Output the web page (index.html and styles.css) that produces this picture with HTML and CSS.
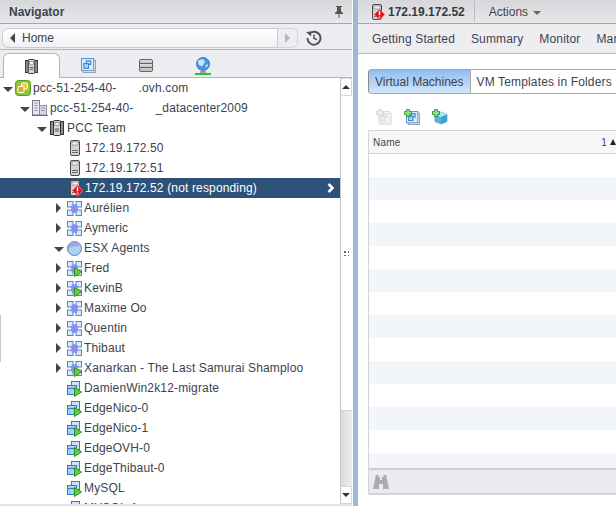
FILE: index.html
```html
<!DOCTYPE html>
<html lang="en">
<head>
    <meta charset="UTF-8">
    <title>Navigator</title>
    <link rel="stylesheet" href="styles.css">
</head>
<body>
<svg class="sprite">
    <symbol id="host" viewBox="0 0 10 16">
        <rect x="0.5" y="0.5" width="9" height="15" rx="1.5" fill="#d4d4d4" stroke="#4a4a4a"/>
        <rect x="2" y="2" width="6" height="3" fill="#f4f4f4" stroke="#777" stroke-width=".6"/>
        <path d="M2 10.500h6M2 12.500h6" stroke="#666"/>
    </symbol>
    <symbol id="alert" viewBox="0 0 10 10">
        <path d="M5 0 10 5 5 10 0 5Z" fill="#e0121c" stroke="#fff" stroke-width=".4"/>
        <path d="M5 2v3.600M5 6.800v1.200" stroke="#fff" stroke-width="1.300"/>
    </symbol>
    <symbol id="cluster" viewBox="0 0 14 16">
        <rect x="0.5" y="1.5" width="3.5" height="13" fill="#8f8f8f" stroke="#333"/>
        <rect x="10" y="1.5" width="3.5" height="13" fill="#8f8f8f" stroke="#333"/>
        <rect x="3.5" y="0.5" width="7" height="15" rx="1" fill="#d8d8d8" stroke="#333"/>
        <rect x="5" y="2.5" width="4" height="3" fill="#fff" stroke="#666" stroke-width=".6"/>
        <path d="M5 9h4M5 11h4" stroke="#555"/>
    </symbol>
    <symbol id="vcenter" viewBox="0 0 16 16">
        <rect x="0.5" y="0.5" width="15" height="15" rx="3" fill="#8cc43c" stroke="#5c9a1e"/>
        <rect x="6.5" y="3" width="6" height="6" rx="1" fill="#f5c842" stroke="#fff"/>
        <rect x="3" y="6.5" width="6" height="6" rx="1" fill="#eda51f" stroke="#fff"/>
    </symbol>
    <symbol id="datacenter" viewBox="0 0 16 16">
        <rect x="0.5" y="0.5" width="7" height="14.5" fill="#e6e6ee" stroke="#77778c"/>
        <rect x="7.5" y="5.5" width="7" height="9.5" fill="#d8d8e4" stroke="#8d8da0"/>
        <path d="M2.500 3h3M2.500 5.500h3M2.500 8h3M2.500 10.500h3M9.500 8h3M9.500 10.500h3" stroke="#8a8aa0"/>
        <path d="M0 15.500h16" stroke="#6a6a80"/>
    </symbol>
    <symbol id="pool" viewBox="0 0 15 15">
        <rect x="0.500" y="0.500" width="5.500" height="5.500" fill="#d8eafb" stroke="#3f8ed8"/>
        <rect x="9" y="0.500" width="5.500" height="5.500" fill="#d8eafb" stroke="#3f8ed8"/>
        <rect x="0.500" y="9" width="5.500" height="5.500" fill="#d8eafb" stroke="#3f8ed8"/>
        <rect x="9" y="9" width="5.500" height="5.500" fill="#d8eafb" stroke="#3f8ed8"/>
        <path d="M6 7.500a1.500 1.500 0 0 1 1.500-3 1.500 1.500 0 0 1 1.500 3 1.500 1.500 0 0 1-1.500 3 1.500 1.500 0 0 1-1.500-3Z" fill="#8e8cf0" stroke="#8e8cf0" stroke-width="2"/>
    </symbol>
    <symbol id="play" viewBox="0 0 8 10">
        <path d="M0.500 0.500 7.500 5 0.500 9.500Z" fill="#5fd33a" stroke="#2d8f1a"/>
    </symbol>
    <symbol id="vm" viewBox="0 0 15 15">
        <rect x="4.500" y="0.500" width="8" height="8" fill="#cfe4f8" stroke="#2f7fc4"/>
        <rect x="0.500" y="4.500" width="9" height="9" fill="#a8cff2" stroke="#2f7fc4"/>
        <path d="M0.500 7.500h9" stroke="#2f7fc4"/>
    </symbol>
    <symbol id="folder" viewBox="0 0 16 16">
        <rect x="2.500" y="2.500" width="13" height="13" fill="#e6e6ea" stroke="#9a9aa6"/>
        <rect x="0.500" y="0.500" width="13" height="13" fill="#dcebf9" stroke="#4c90ce"/>
        <rect x="5.500" y="3" width="5" height="4" fill="#a9d0f2" stroke="#2f7fc4"/>
        <rect x="3" y="6" width="5" height="5" fill="#a9d0f2" stroke="#2f7fc4"/>
    </symbol>
    <symbol id="storage" viewBox="0 0 14 13">
        <rect x="0.500" y="0.500" width="13" height="12" rx="1.500" fill="#c4c4c4" stroke="#666"/>
        <path d="M1 4.500h12M1 8.500h12" stroke="#666"/>
        <path d="M1.500 2h11M1.500 6h11" stroke="#ececec"/>
    </symbol>
    <symbol id="globe" viewBox="0 0 16 18">
        <circle cx="8" cy="7" r="6.500" fill="#4a94e6" stroke="#3a7cc8"/>
        <path d="M3 3.500 8 2 10 5 7 9.500 3.500 7.500ZM10 8.500l3-1.500-1 3.500Z" fill="#cfe7fb"/>
        <path d="M8 13.500v1.500M5 15h6" stroke="#888" stroke-width="1.500"/>
        <path d="M0 17h16" stroke="#2fbf2f" stroke-width="2"/>
    </symbol>
    <symbol id="esx" viewBox="0 0 15 15">
        <circle cx="7.500" cy="7.500" r="7" fill="#a9d4f2" stroke="#6a78b8"/>
        <path d="M1 8.500C4 4 9 7 14 4 12.500 1.500 10 .5 7.500 .5 3.500 .5 .5 4 1 8.500Z" fill="#a7a3e6"/>
    </symbol>
    <symbol id="history" viewBox="0 0 16 16">
        <path d="M3 4A6.500 6.500 0 1 1 1.500 8" fill="none" stroke="#555" stroke-width="2"/>
        <path d="M0 2 5.500 1.500 5 6.500Z" fill="#555"/>
        <path d="M8 4.500V8.500L11 9.500" fill="none" stroke="#555" stroke-width="1.500"/>
    </symbol>
    <symbol id="box" viewBox="0 0 14 14">
        <path d="M7 1 13 3.500V10.500L7 13 1 10.500V3.500Z" fill="#5bb2e0" stroke="#3d8fc0" stroke-width=".6"/>
        <path d="M1 3.500 7 6 13 3.500 7 1Z" fill="#b6e2f6"/>
        <path d="M7 6V13L13 10.500V3.500Z" fill="#3f9ed2"/>
    </symbol>
    <symbol id="plus" viewBox="0 0 8 8">
        <path d="M2.500 .5h3v2h2v3h-2v2h-3v-2h-2v-3h2Z" fill="#8be08a" stroke="#1f8a2a" stroke-width=".8"/>
    </symbol>
</svg>

<div class="layout">
    <div class="navigator">
        <div class="panel-title">
            <span>Navigator</span>
            <svg class="pin" viewBox="0 0 10 12"><path d="M2 0h6v1H7v4l2 2v1H5.500v4h-1V8H1V7l2-2V1H2Z" fill="#555"/></svg>
        </div>
        <div class="home-bar">
            <div class="home-btn"><span class="tri-left"></span>Home</div>
            <div class="forward-btn"><span class="tri-right"></span></div>
            <svg class="history"><use href="#history"/></svg>
        </div>
        <div class="nav-tabs">
            <div class="nav-tab active"><svg class="tab-hosts"><use href="#cluster"/></svg></div>
            <div class="nav-tab"><svg class="tab-vms"><use href="#folder"/></svg></div>
            <div class="nav-tab"><svg class="tab-storage"><use href="#storage"/></svg></div>
            <div class="nav-tab"><svg class="tab-net"><use href="#globe"/></svg></div>
        </div>
        <div class="tree-wrap">
            <div class="tree">
                <div class="row lv0"><span class="arrow open"></span><span class="ico"><svg class="i16"><use href="#vcenter"/></svg></span><span>pcc-51-254-40-</span><span class="blank-a">.ovh.com</span></div>
                <div class="row lv1"><span class="arrow open"></span><span class="ico"><svg class="i16"><use href="#datacenter"/></svg></span><span>pcc-51-254-40-</span><span class="blank-b">_datacenter2009</span></div>
                <div class="row lv2"><span class="arrow open"></span><span class="ico"><svg class="i16"><use href="#cluster"/></svg></span><span>PCC Team</span></div>
                <div class="row lv3 hostrow"><span class="arrow"></span><span class="ico"><svg class="ihost"><use href="#host"/></svg></span><span>172.19.172.50</span></div>
                <div class="row lv3 hostrow"><span class="arrow"></span><span class="ico"><svg class="ihost"><use href="#host"/></svg></span><span>172.19.172.51</span></div>
                <div class="row lv3 hostrow selected"><span class="arrow"></span><span class="ico"><svg class="ihost"><use href="#host"/></svg><svg class="badge-alert"><use href="#alert"/></svg></span><span>172.19.172.52 (not responding)</span><svg class="chevron" viewBox="0 0 8 10"><path d="M1.500 1 5.500 5 1.500 9" fill="none" stroke="#fff" stroke-width="2.600"/></svg></div>
                <div class="row lv3"><span class="arrow closed"></span><span class="ico"><svg class="i15"><use href="#pool"/></svg></span><span>Aurélien</span></div>
                <div class="row lv3"><span class="arrow closed"></span><span class="ico"><svg class="i15"><use href="#pool"/></svg></span><span>Aymeric</span></div>
                <div class="row lv3"><span class="arrow open"></span><span class="ico"><svg class="i15"><use href="#esx"/></svg></span><span>ESX Agents</span></div>
                <div class="row lv3"><span class="arrow closed"></span><span class="ico"><svg class="i15"><use href="#pool"/></svg><svg class="badge-play"><use href="#play"/></svg></span><span>Fred</span></div>
                <div class="row lv3"><span class="arrow closed"></span><span class="ico"><svg class="i15"><use href="#pool"/></svg><svg class="badge-play"><use href="#play"/></svg></span><span>KevinB</span></div>
                <div class="row lv3"><span class="arrow closed"></span><span class="ico"><svg class="i15"><use href="#pool"/></svg></span><span>Maxime Oo</span></div>
                <div class="row lv3"><span class="arrow closed"></span><span class="ico"><svg class="i15"><use href="#pool"/></svg></span><span>Quentin</span></div>
                <div class="row lv3"><span class="arrow closed"></span><span class="ico"><svg class="i15"><use href="#pool"/></svg></span><span>Thibaut</span></div>
                <div class="row lv3"><span class="arrow closed"></span><span class="ico"><svg class="i15"><use href="#pool"/></svg><svg class="badge-play"><use href="#play"/></svg></span><span>Xanarkan - The Last Samurai Shamploo</span></div>
                <div class="row lv3"><span class="arrow"></span><span class="ico"><svg class="i15"><use href="#vm"/></svg><svg class="badge-play"><use href="#play"/></svg></span><span>DamienWin2k12-migrate</span></div>
                <div class="row lv3"><span class="arrow"></span><span class="ico"><svg class="i15"><use href="#vm"/></svg><svg class="badge-play"><use href="#play"/></svg></span><span>EdgeNico-0</span></div>
                <div class="row lv3"><span class="arrow"></span><span class="ico"><svg class="i15"><use href="#vm"/></svg><svg class="badge-play"><use href="#play"/></svg></span><span>EdgeNico-1</span></div>
                <div class="row lv3"><span class="arrow"></span><span class="ico"><svg class="i15"><use href="#vm"/></svg><svg class="badge-play"><use href="#play"/></svg></span><span>EdgeOVH-0</span></div>
                <div class="row lv3"><span class="arrow"></span><span class="ico"><svg class="i15"><use href="#vm"/></svg><svg class="badge-play"><use href="#play"/></svg></span><span>EdgeThibaut-0</span></div>
                <div class="row lv3"><span class="arrow"></span><span class="ico"><svg class="i15"><use href="#vm"/></svg><svg class="badge-play"><use href="#play"/></svg></span><span>MySQL</span></div>
                <div class="row lv3"><span class="arrow"></span><span class="ico"><svg class="i15"><use href="#vm"/></svg></span><span>MYSQL-1</span></div>
            </div>
            <div class="scrollbar">
                <div class="sb-btn"><span class="sb-up"></span></div>
                <div class="sb-thumb"><span class="grip"></span></div>
                <div class="sb-track"></div>
                <div class="sb-btn"><span class="sb-down"></span></div>
            </div>
        </div>
    </div>

    <div class="splitter"></div>

    <div class="content">
        <div class="panel-title content-title">
            <span class="title-ico"><svg class="ihost"><use href="#host"/></svg><svg class="badge-alert"><use href="#alert"/></svg></span>
            <b>172.19.172.52</b>
            <span class="title-sep"></span>
            <span class="actions">Actions</span><span class="caret"></span>
        </div>
        <div class="content-tabs">
            <span>Getting Started</span>
            <span>Summary</span>
            <span>Monitor</span>
            <span>Manage</span>
        </div>
        <div class="content-body">
            <div class="segments">
                <div class="segment on">Virtual Machines</div>
                <div class="segment wide">VM Templates in Folders</div>
            </div>
            <div class="toolbar">
                <span class="tool faded"><svg class="i14"><use href="#folder"/></svg><svg class="badge-plus"><use href="#plus"/></svg></span>
                <span class="tool"><svg class="i14"><use href="#folder"/></svg><svg class="badge-plus"><use href="#plus"/></svg></span>
                <span class="tool"><svg class="i14"><use href="#box"/></svg><svg class="badge-plus"><use href="#plus"/></svg></span>
            </div>
            <div class="grid">
                <div class="grid-head"><span>Name</span><span class="sort">1<span class="sort-tri"></span></span></div>
                <div class="grid-rows">
                    <div class="grid-row"></div><div class="grid-row"></div><div class="grid-row"></div>
                    <div class="grid-row"></div><div class="grid-row"></div><div class="grid-row"></div>
                    <div class="grid-row"></div><div class="grid-row"></div><div class="grid-row"></div>
                    <div class="grid-row"></div><div class="grid-row"></div><div class="grid-row"></div>
                    <div class="grid-row"></div><div class="grid-row"></div>
                </div>
                <div class="grid-foot">
                    <svg class="binoculars" viewBox="0 0 16 14"><path d="M2.500 0h3v2H7v3h2V2h1.500V0h3v2L16 14h-6V9H6v5H0L2.500 2Z" fill="#a9adb2"/></svg>
                </div>
            </div>
        </div>
    </div>
</div>
<div class="edge-mark"></div>
</body>
</html>
```

FILE: styles.css
```css
html, body {
    margin: 0;
    padding: 0;
    height: 506px;
    overflow: hidden;
}

body {
    font-family: "Liberation Sans", Arial, sans-serif;
    font-size: 12px;
    color: #3c4350;
    background-color: #ffffff;
}

svg {
    display: block;
}

.sprite {
    display: none;
}

.layout {
    display: flex;
    height: 506px;
}

.navigator {
    width: 352px;
    height: 504px;
    flex: none;
    display: flex;
    flex-direction: column;
    border-bottom: 2px solid #e4e4e4;
    background-color: #ebedf0;
}

.panel-title {
    height: 23px;
    flex: none;
    display: flex;
    align-items: center;
    justify-content: space-between;
    padding: 0 8px 0 9px;
    font-weight: bold;
    background: linear-gradient(#d6d7da, #e8e8ea);
    border-bottom: 1px solid #a6a6a6;
}

.pin {
    width: 10px;
    height: 12px;
}

/* home bar */
.home-bar {
    height: 26px;
    flex: none;
    display: flex;
    align-items: center;
    padding-top: 2px;
    box-sizing: border-box;
    border-bottom: 1px solid #b4b4b4;
}

.home-btn {
    width: 276px;
    height: 20px;
    margin-left: 2px;
    display: flex;
    align-items: center;
    box-sizing: border-box;
    font-size: 12px;
    border: 1px solid #c9ccd2;
    border-radius: 6px 0 0 6px;
    background: linear-gradient(#ffffff, #eff1f4);
}

.tri-left {
    width: 0;
    height: 0;
    margin: 0 7px 0 7px;
    border-top: 5px solid transparent;
    border-bottom: 5px solid transparent;
    border-right: 5px solid #444;
}

.forward-btn {
    width: 20px;
    height: 20px;
    display: flex;
    align-items: center;
    justify-content: center;
    box-sizing: border-box;
    border: 1px solid #d2d4d8;
    border-left: none;
    border-radius: 0 6px 6px 0;
}

.tri-right {
    width: 0;
    height: 0;
    border-top: 5px solid transparent;
    border-bottom: 5px solid transparent;
    border-left: 5px solid #b4b6ba;
}

.history {
    width: 16px;
    height: 16px;
    margin-left: 8px;
}

/* tabs */
.nav-tabs {
    height: 28px;
    flex: none;
    display: flex;
    padding-left: 3px;
    box-sizing: border-box;
    padding-top: 3px;
    border-bottom: 1px solid #b4b4b4;
}

.nav-tab {
    width: 57px;
    height: 25px;
    display: flex;
    align-items: center;
    justify-content: center;
    box-sizing: border-box;
}

.nav-tab.active {
    background-color: #ffffff;
    border: 1px solid #b4b4b4;
    border-bottom: none;
    border-radius: 6px 6px 0 0;
}

.tab-hosts {
    width: 13px;
    height: 15px;
}

.tab-vms {
    width: 15px;
    height: 15px;
}

.tab-storage {
    width: 14px;
    height: 13px;
}

.tab-net {
    width: 16px;
    height: 18px;
}

/* tree */
.tree-wrap {
    flex: 1;
    display: flex;
    min-height: 0;
    background-color: #ffffff;
}

.tree {
    width: 340px;
    flex: none;
    overflow: hidden;
    letter-spacing: 0.15px;
}

.row {
    height: 20px;
    display: flex;
    align-items: center;
    white-space: nowrap;
}

.lv0 { padding-left: 2px; }
.lv1 { padding-left: 19px; }
.lv2 { padding-left: 36px; }
.lv3 { padding-left: 53px; }

.arrow {
    width: 12px;
    height: 12px;
    flex: none;
    display: flex;
    align-items: center;
    justify-content: center;
}

.arrow.open::before {
    content: "";
    border-left: 5px solid transparent;
    border-right: 5px solid transparent;
    border-top: 5px solid #444;
    margin-top: 2px;
}

.arrow.closed::before {
    content: "";
    border-top: 5px solid transparent;
    border-bottom: 5px solid transparent;
    border-left: 5px solid #444;
    margin-left: -1px;
}

.ico {
    width: 17px;
    height: 18px;
    flex: none;
    margin-right: 2px;
    position: relative;
    display: flex;
    align-items: center;
    justify-content: flex-end;
}

.i16 {
    width: 16px;
    height: 16px;
}

.i15 {
    width: 15px;
    height: 15px;
}

.i14 {
    width: 14px;
    height: 14px;
    margin: 2px 0 0 2px;
}

.ihost {
    width: 10px;
    height: 16px;
}

.hostrow .ico {
    margin-left: 5px;
    width: 11px;
    margin-right: 4px;
    justify-content: flex-start;
}

.badge-alert {
    position: absolute;
    left: 2px;
    bottom: 1px;
    width: 11px;
    height: 11px;
}

.badge-play {
    position: absolute;
    right: 0;
    bottom: 0;
    width: 8px;
    height: 10px;
}

.badge-plus {
    position: absolute;
    left: 0;
    top: 0;
    width: 8px;
    height: 8px;
}

.blank-a {
    margin-left: 22px;
}

.blank-b {
    margin-left: 22px;
}

.selected {
    background-color: #2d5279;
    color: #ffffff;
}

.chevron {
    width: 8px;
    height: 10px;
    margin-left: auto;
    margin-right: 5px;
}

/* scrollbar */
.scrollbar {
    width: 12px;
    flex: none;
    display: flex;
    flex-direction: column;
    box-sizing: border-box;
    border-left: 1px solid #c4c4c4;
    background-color: #ffffff;
}

.sb-btn {
    height: 18px;
    flex: none;
    display: flex;
    align-items: center;
    justify-content: center;
    box-sizing: border-box;
    border: 1px solid #d8d8d8;
    border-left: none;
}

.sb-up {
    border-left: 4px solid transparent;
    border-right: 4px solid transparent;
    border-bottom: 4px solid #333;
}

.sb-down {
    border-left: 4px solid transparent;
    border-right: 4px solid transparent;
    border-top: 4px solid #333;
}

.sb-thumb {
    height: 315px;
    flex: none;
    display: flex;
    align-items: center;
    box-sizing: border-box;
    padding-left: 2px;
    border-bottom: 1px solid #cfcfcf;
    background-color: #ffffff;
}

.grip {
    width: 6px;
    height: 6px;
    background-image: radial-gradient(#666 0.8px, transparent 1px);
    background-size: 4px 4px;
}

.sb-track {
    flex: 1;
    background: linear-gradient(90deg, #dcdcdc, #ededed);
}

.splitter {
    width: 5px;
    margin-left: 1px;
    flex: none;
    background-color: #9cb8d2;
}

/* right side */
.content {
    flex: 1;
    min-width: 0;
    display: flex;
    flex-direction: column;
    overflow: hidden;
}

.content-title {
    justify-content: flex-start;
    padding: 0 0 0 14px;
    font-weight: normal;
}

.title-ico {
    width: 16px;
    height: 18px;
    position: relative;
    flex: none;
    display: flex;
    align-items: center;
}

.content-title b {
    color: #333a46;
}

.title-sep {
    width: 1px;
    height: 21px;
    margin: 0 14px 0 9px;
    background-color: #bdbdbd;
}

.caret {
    margin-left: 5px;
    margin-top: 2px;
    border-left: 4px solid transparent;
    border-right: 4px solid transparent;
    border-top: 4px solid #666;
}

.content-tabs {
    height: 30px;
    flex: none;
    display: flex;
    align-items: center;
    gap: 16px;
    padding-left: 14px;
    box-sizing: border-box;
    white-space: nowrap;
    letter-spacing: 0.15px;
    background-color: #eeeef0;
    border-bottom: 1px solid #b8b8b8;
}

.content-body {
    flex: 1;
    min-height: 0;
    display: flex;
    flex-direction: column;
    padding: 15px 0 11px 10px;
}

.segments {
    display: flex;
    height: 25px;
    flex: none;
    white-space: nowrap;
}

.segment {
    display: flex;
    align-items: center;
    padding: 0 6px;
    box-sizing: border-box;
    border: 1px solid #a8a8a8;
    border-left: none;
    background-color: #ffffff;
}

.segment.wide {
    letter-spacing: 0.15px;
}

.segment.on {
    width: 103px;
    border-left: 1px solid #8a8a8a;
    border-radius: 4px 0 0 4px;
    background: linear-gradient(#8fbef2, #d3e6fa);
}

.toolbar {
    height: 36px;
    flex: none;
    display: flex;
    align-items: center;
    gap: 12px;
    padding-left: 8px;
    box-sizing: border-box;
    padding-top: 10px;
}

.tool {
    position: relative;
    width: 16px;
    height: 16px;
}

.tool.faded {
    opacity: 0.3;
    filter: grayscale(1);
}

.grid {
    flex: 1;
    min-height: 0;
    display: flex;
    flex-direction: column;
    border: 1px solid #d4d4d4;
    border-right: none;
}

.grid-head {
    height: 23px;
    flex: none;
    display: flex;
    align-items: center;
    justify-content: space-between;
    padding-left: 4px;
    box-sizing: border-box;
    font-size: 10px;
    letter-spacing: 0.2px;
    background-color: #f7f7f7;
    border-bottom: 1px solid #d4d4d4;
}

.sort {
    display: flex;
    align-items: center;
    gap: 3px;
}

.sort-tri {
    border-left: 3px solid transparent;
    border-right: 3px solid transparent;
    border-bottom: 6px solid #222;
}

.grid-rows {
    flex: 1;
    min-height: 0;
    overflow: hidden;
}

.grid-row {
    height: 23px;
}

.grid-row:nth-child(even) {
    background-color: #f2f5fa;
}

.grid-foot {
    height: 26px;
    flex: none;
    display: flex;
    align-items: center;
    padding-left: 4px;
    box-sizing: border-box;
    background-color: #e9ebee;
    border-top: 2px solid #d0d0d0;
    border-bottom: 1px solid #d4d4d4;
}

.binoculars {
    width: 16px;
    height: 14px;
}

.edge-mark {
    position: absolute;
    left: 0;
    top: 315px;
    width: 1px;
    height: 47px;
    background-color: #c8c8c8;
}
```
